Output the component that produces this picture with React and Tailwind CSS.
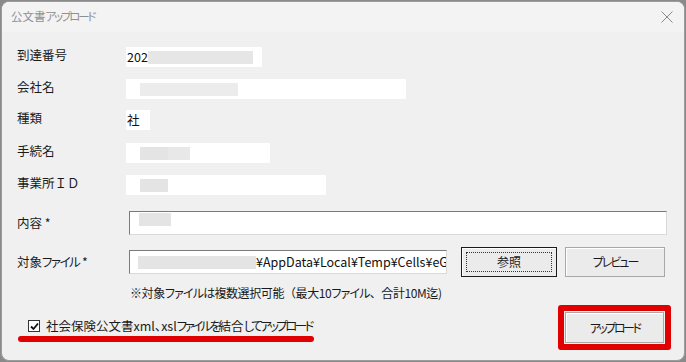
const font = {
  fontFamily: '"Noto Sans CJK JP", "Noto Sans", sans-serif',
};

// narrow the kana runs, keep full-width punctuation and letters at full width
function Jp({ text, kana = "tracking-[-1.5px]", full = true }) {
  const parts = text.split(/([\u3040-\u30ff]+|[、（ＩＤ]+)/);
  return parts.map((p, i) => {
    if (full && /^[、（ＩＤ]+$/.test(p)) {
      return (
        <span key={i} className="[font-feature-settings:normal]">
          {p}
        </span>
      );
    }
    if (/^[\u3040-\u30ff]+$/.test(p)) {
      return (
        <span key={i} className={kana}>
          {p}
        </span>
      );
    }
    return p;
  });
}

function Blur({ w, className = "" }) {
  return <span className={`inline-block shrink-0 h-[13px] bg-[#e4e4e4] ${className}`} style={{ width: w }} />;
}

function InfoRow({ label, fieldW, children, className = "" }) {
  return (
    <div className={`flex items-start h-[20px] ${className}`}>
      <div className="w-[109px] shrink-0 text-[12.5px] leading-[16px] text-[#1a1a1a]">
        <Jp text={label} />
      </div>
      <div className="h-[20px] shrink-0 bg-white flex items-center overflow-hidden" style={{ width: fieldW }}>
        {children}
      </div>
    </div>
  );
}

function WinButton({ children, focused, className = "" }) {
  return (
    <button
      className={`shrink-0 flex items-center justify-center text-[12px] text-[#1a1a1a] bg-[#ebebeb] ${
        focused ? "border border-[#1a1a1a]" : "border border-[#a8a8a8]"
      } shadow-[inset_1px_1px_0_#ffffff] ${className}`}
    >
      {focused ? (
        <span className="w-[calc(100%-8px)] h-[calc(100%-8px)] border border-dotted border-[#333] flex items-center justify-center">
          {children}
        </span>
      ) : (
        children
      )}
    </button>
  );
}

export default function App() {
  return (
    <div className="w-[686px] h-[362px] bg-[#8a8a8a] overflow-hidden [font-feature-settings:'palt']" style={font}>
      <div className="w-[684px] h-[360px] ml-[1px] mt-[1px] rounded-[8px] border border-[#9c9c9c] bg-[#f0f0f0] overflow-hidden flex flex-col">
        {/* title bar */}
        <div className="h-[30px] shrink-0 bg-[#f3f3f3] flex items-center justify-between pl-[9px] pr-[10px]">
          <span className="text-[11.5px] text-[#8f8f8f]">
            <Jp text="公文書アップロード" kana="tracking-[-2.2px]" />
          </span>
          <svg width="12" height="12" viewBox="0 0 12 12" className="mr-[1px]">
            <path d="M0.5 0.5 L11.5 11.5 M11.5 0.5 L0.5 11.5" stroke="#8a8a8a" strokeWidth="1" />
          </svg>
        </div>

        <div className="pl-[15px] pt-[15px] flex flex-col">
          <InfoRow label="到達番号" fieldW={136} className="mb-[12px]">
            <span className="text-[12.5px] text-[#111] pl-[1px]">202</span>
            <Blur w={105} className="bg-[#e6e6e6]" />
          </InfoRow>
          <InfoRow label="会社名" fieldW={280} className="mb-[11px]">
            <span className="w-[14px] shrink-0" />
            <Blur w={98} className="bg-[#ececec]" />
          </InfoRow>
          <InfoRow label="種類" fieldW={24} className="mb-[13px]">
            <span className="text-[12.5px] text-[#111] pl-[1px]">社</span>
          </InfoRow>
          <InfoRow label="手続名" fieldW={144} className="mb-[12px]">
            <span className="w-[14px] shrink-0" />
            <Blur w={28} className="bg-[#d6d6d6]" />
            <Blur w={22} className="bg-[#e8e8e8]" />
          </InfoRow>
          <InfoRow label="事業所ＩＤ" fieldW={200}>
            <span className="w-[14px] shrink-0" />
            <Blur w={28} className="bg-[#d8d8d8]" />
          </InfoRow>

          {/* 内容 */}
          <div className="flex items-center h-[24px] mt-[16px]">
            <div className="w-[112px] shrink-0 text-[12.5px] text-[#1a1a1a]">内容 *</div>
            <div className="w-[538px] shrink-0 h-[24px] bg-white border border-[#7a7a7a] border-r-[#d9d9d9] border-b-[#d9d9d9] flex items-start pt-[1px] pl-[9px]">
              <Blur w={32} className="bg-[#dcdcdc] h-[8px]" />
            </div>
          </div>

          {/* 対象ファイル */}
          <div className="flex items-center h-[30px] mt-[12px]">
            <div className="w-[112px] shrink-0 text-[12.5px] text-[#1a1a1a]">
              <Jp text="対象ファイル *" />
            </div>
            <div className="w-[318px] shrink-0 h-[24px] bg-white border border-[#7a7a7a] border-r-[#d9d9d9] border-b-[#d9d9d9] flex items-center pl-[8px] overflow-hidden whitespace-nowrap">
              <Blur w={36} className="bg-[#e2e2e2]" />
              <Blur w={82} className="bg-[#d8d8d8]" />
              <span className="text-[12.5px] text-[#111]">¥AppData¥Local¥Temp¥Cells¥eG</span>
            </div>
            <WinButton focused className="w-[96px] h-[30px] ml-[14px]">
              参照
            </WinButton>
            <WinButton className="w-[100px] h-[30px] ml-[8px]">
              <Jp text="プレビュー" kana="tracking-[-2px]" />
            </WinButton>
          </div>

          <div className="ml-[113px] mt-[8px] text-[12px] text-[#1a1a1a] leading-[16px] tracking-[-0.4px]">
            <Jp text="※対象ファイルは複数選択可能（最大10ファイル、合計10M迄)" kana="tracking-[-0.8px]" />
          </div>

          {/* bottom */}
          <div className="flex items-start justify-between mt-[4px] pr-[13px]">
            <div className="flex flex-col pt-[14px] pl-[2px]">
              <div className="flex items-center pl-[9px]">
                <span className="w-[12px] h-[12px] shrink-0 border border-[#333] bg-white flex items-center justify-center">
                  <svg width="9" height="9" viewBox="0 0 9 9">
                    <path d="M1 4.5 L3.5 7 L8 1.5" stroke="#111" strokeWidth="1.8" fill="none" />
                  </svg>
                </span>
                <span className="ml-[6px] text-[12.5px] text-[#1a1a1a] leading-[14px] whitespace-nowrap">
                  <Jp text="社会保険公文書xml、xslファイルを結合してアップロード" kana="tracking-[-2.6px]" full={false} />
                </span>
              </div>
              <div className="w-[296px] h-[6px] rounded-full bg-[#e00000] mt-[3px] -ml-[1px]" />
            </div>
            <div className="w-[113px] h-[45px] border-[6px] border-[#e00000] rounded-[3px] flex items-center justify-center bg-[#f0f0f0]">
              <WinButton className="w-[99px] h-[31px]">
                <Jp text="アップロード" kana="tracking-[-2.5px]" />
              </WinButton>
            </div>
          </div>
        </div>
      </div>
    </div>
  );
}
